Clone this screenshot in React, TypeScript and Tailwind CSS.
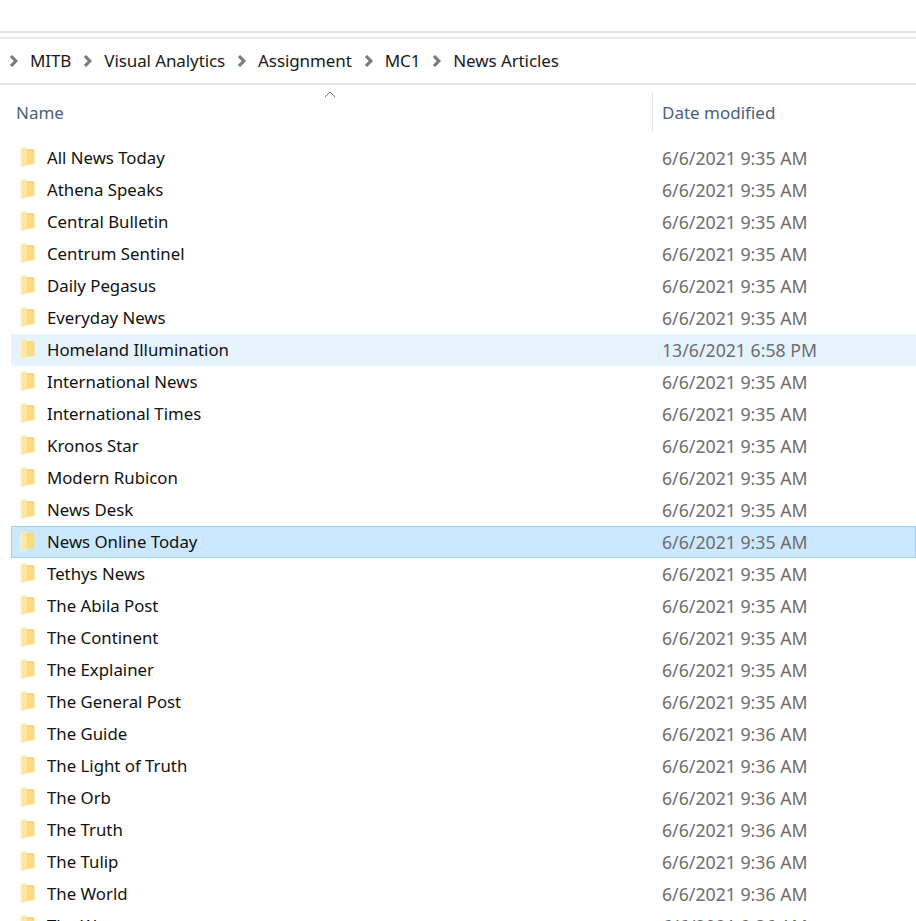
import React from "react";

const font = { fontFamily: '"Noto Sans", "Open Sans", sans-serif' };

const rows: [string, string][] = [
  ["All News Today", "6/6/2021 9:35 AM"],
  ["Athena Speaks", "6/6/2021 9:35 AM"],
  ["Central Bulletin", "6/6/2021 9:35 AM"],
  ["Centrum Sentinel", "6/6/2021 9:35 AM"],
  ["Daily Pegasus", "6/6/2021 9:35 AM"],
  ["Everyday News", "6/6/2021 9:35 AM"],
  ["Homeland Illumination", "13/6/2021 6:58 PM"],
  ["International News", "6/6/2021 9:35 AM"],
  ["International Times", "6/6/2021 9:35 AM"],
  ["Kronos Star", "6/6/2021 9:35 AM"],
  ["Modern Rubicon", "6/6/2021 9:35 AM"],
  ["News Desk", "6/6/2021 9:35 AM"],
  ["News Online Today", "6/6/2021 9:35 AM"],
  ["Tethys News", "6/6/2021 9:35 AM"],
  ["The Abila Post", "6/6/2021 9:35 AM"],
  ["The Continent", "6/6/2021 9:35 AM"],
  ["The Explainer", "6/6/2021 9:35 AM"],
  ["The General Post", "6/6/2021 9:35 AM"],
  ["The Guide", "6/6/2021 9:36 AM"],
  ["The Light of Truth", "6/6/2021 9:36 AM"],
  ["The Orb", "6/6/2021 9:36 AM"],
  ["The Truth", "6/6/2021 9:36 AM"],
  ["The Tulip", "6/6/2021 9:36 AM"],
  ["The World", "6/6/2021 9:36 AM"],
  ["The Wrap", "6/6/2021 9:36 AM"],
];

const crumbs = ["MITB", "Visual Analytics", "Assignment", "MC1", "News Articles"];

function Chevron() {
  return (
    <svg width="10" height="14" viewBox="0 0 10 14" className="shrink-0">
      <path d="M2 2 L6.8 7 L2 12" fill="none" stroke="#7a7a7a" strokeWidth="3.2" />
    </svg>
  );
}

function Folder() {
  return (
    <svg width="17" height="22" viewBox="0 0 17 22" className="-mt-[3px] shrink-0">
      <path d="M1.5 2 L7 1 L7 20 L3 21.5 L1.5 20 Z" fill="#fdeebb" />
      <path d="M6 3 L15.5 3 L15.5 18 L6 19 Z" fill="#f9da7f" />
      <path d="M3 2.5 L6 1.5 L8 4 L8 18.5 L3 20.5 Z" fill="#fde6a2" />
    </svg>
  );
}

export default function App() {
  return (
    <div className="h-[921px] w-[916px] overflow-hidden bg-white" style={font}>
      <div className="h-[31px]" />
      <div className="h-[2px] bg-[#e3e3e3]" />
      <div className="h-[4px]" />
      <div className="h-[2px] bg-[#e6e6e6]" />
      <div className="flex h-[44px] items-center pl-[9px] text-[17px] leading-[24px] tracking-[-0.1px] text-[#1a1a1a]">
        {crumbs.map((c) => (
          <React.Fragment key={c}>
            <Chevron />
            <span className="ml-[11px] mr-[12px]">{c}</span>
          </React.Fragment>
        ))}
      </div>
      <div className="h-[2px] bg-[#e3e3e3]" />
      <div className="relative flex h-[57px] text-[17px] leading-[24px] text-[#4c607a]">
        <svg width="12" height="7" viewBox="0 0 12 7" className="absolute left-[324px] top-[6px]">
          <path d="M1 6 L6 1 L11 6" fill="none" stroke="#757575" strokeWidth="1" />
        </svg>
        <div className="w-[652px] pl-[16px] pt-[16px]">Name</div>
        <div className="mt-[7px] h-[40px] border-l border-[#e5e5e5] pl-[9px] pt-[9px]">Date modified</div>
      </div>
      <div className="pl-[11px]">
        {rows.map(([name, date]) => {
          const hover = name === "Homeland Illumination";
          const selected = name === "News Online Today";
          return (
            <div
              key={name}
              className={
                "flex h-[32px] items-center border text-[17px] leading-[24px] " +
                (selected
                  ? "border-[#99d1ff] bg-[#cce8ff]"
                  : hover
                    ? "border-[#e5f3ff] bg-[#e5f3ff]"
                    : "border-transparent")
              }
            >
              <div className="flex w-[650px] items-center pl-[7px]">
                <Folder />
                <span className="ml-[11px] text-[16.8px] text-[#111111]">{name}</span>
              </div>
              <span className="text-[17.7px] text-[#6d6d6d]">{date}</span>
            </div>
          );
        })}
      </div>
    </div>
  );
}
